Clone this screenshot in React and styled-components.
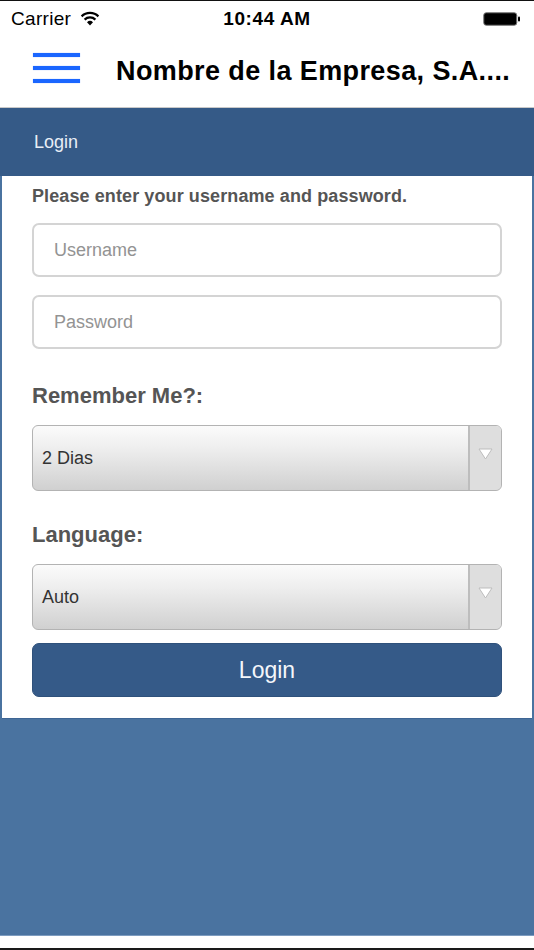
import React from 'react';
import styled, { createGlobalStyle } from 'styled-components';

const GlobalStyle = createGlobalStyle`
  html, body {
    margin: 0;
    padding: 0;
    background: #ffffff;
  }
  * {
    box-sizing: border-box;
  }
`;

const Screen = styled.div`
  width: 534px;
  height: 950px;
  display: flex;
  flex-direction: column;
  font-family: 'Liberation Sans', Arial, sans-serif;
  border-top: 1px solid #111;
  border-bottom: 2px solid #1a1a1a;
  background: #fff;
  overflow: hidden;
`;

const StatusBar = styled.div`
  height: 35px;
  padding: 0 11px;
  display: grid;
  grid-template-columns: 1fr auto 1fr;
  align-items: center;
  font-size: 19px;
  color: #000;
`;

const StatusLeft = styled.div`
  display: flex;
  align-items: center;
  gap: 9px;
  letter-spacing: 0.3px;
`;

const Clock = styled.div`
  font-weight: 700;
  font-size: 19px;
  letter-spacing: 0.6px;
`;

const StatusRight = styled.div`
  display: flex;
  justify-content: flex-end;
  align-items: center;
  padding-right: 2px;
`;

const NavBar = styled.div`
  height: 72px;
  display: flex;
  align-items: center;
  gap: 36px;
  padding: 0 0 0 33px;
  border-bottom: 1px solid #c9c9c9;
`;

const Burger = styled.div`
  width: 47px;
  display: flex;
  flex-direction: column;
  gap: 9px;
  margin-top: -7px;
`;

const BurgerLine = styled.span`
  display: block;
  height: 4px;
  background: #1a66ff;
  box-shadow: 0 0 1px #5c93ff;
`;

const Title = styled.h1`
  margin: 0;
  font-size: 27px;
  font-weight: 700;
  letter-spacing: 0.4px;
  color: #000;
  white-space: nowrap;
`;

const Main = styled.div`
  flex: 1;
  background: #4a73a0;
  display: flex;
  flex-direction: column;
`;

const Header = styled.div`
  height: 68px;
  background: #355a87;
  color: #e8eef6;
  font-size: 18px;
  padding: 0 34px;
  display: flex;
  align-items: center;
`;

const Card = styled.div`
  margin: 0 2px;
  background: #fff;
  padding: 10px 30px 21px 30px;
  display: flex;
  flex-direction: column;
  border-bottom: 1px solid #3e6594;
`;

const Intro = styled.p`
  margin: 0 0 16px;
  font-size: 18px;
  line-height: 21px;
  font-weight: 700;
  letter-spacing: 0.1px;
  color: #555;
`;

const Input = styled.input`
  height: 54px;
  width: 100%;
  border: 2px solid #d4d4d4;
  border-radius: 7px;
  padding: 0 20px;
  font-family: inherit;
  font-size: 18px;
  color: #333;
  margin-bottom: ${p => p.$gap}px;
  outline: none;
  &::placeholder {
    color: #939393;
  }
`;

const Label = styled.label`
  font-size: 22px;
  line-height: 25px;
  font-weight: 700;
  color: #555;
  margin-bottom: 17px;
`;

const Select = styled.div`
  height: 66px;
  display: flex;
  border: 1px solid #b3b3b3;
  border-radius: 6px;
  overflow: hidden;
  margin-bottom: ${p => p.$gap}px;
  background: linear-gradient(to bottom, #fbfbfb 0%, #eeeeee 35%, #d0d0d0 100%);
`;

const SelectValue = styled.div`
  flex: 1;
  display: flex;
  align-items: center;
  padding-left: 9px;
  font-size: 18px;
  color: #333;
`;

const SelectArrow = styled.div`
  width: 33px;
  display: flex;
  align-items: flex-start;
  justify-content: center;
  padding-top: 22px;
  background: #dedede;
  border-left: 2px solid #bdbdbd;
`;

const LoginButton = styled.button`
  height: 54px;
  width: 100%;
  border: 1px solid #2f517b;
  border-radius: 7px;
  background: #355a88;
  color: #f4f6fa;
  font-family: inherit;
  font-size: 23px;
`;

const BottomStrip = styled.div`
  height: 13px;
  background: #fff;
  border-top: 1px solid #7d9cc0;
`;

const Wifi = () => (
  <svg width="20" height="15" viewBox="0 0 20 15">
    <path d="M10 14.5 L7 11.2 A4.4 4.4 0 0 1 13 11.2 Z" fill="#000" />
    <path d="M4.6 8.6 A7.8 7.8 0 0 1 15.4 8.6" stroke="#000" strokeWidth="2.2" fill="none" />
    <path d="M1.6 5.4 A12 12 0 0 1 18.4 5.4" stroke="#000" strokeWidth="2.2" fill="none" />
  </svg>
);

const Battery = () => (
  <svg width="38" height="14" viewBox="0 0 38 14">
    <rect x="0.75" y="0.75" width="33" height="12.5" rx="2.5" fill="#000" stroke="#777" strokeWidth="1" />
    <rect x="35" y="4.5" width="2" height="5" rx="1" fill="#000" />
  </svg>
);

const Caret = () => (
  <svg width="15" height="12" viewBox="0 0 15 12">
    <path d="M1 1 L14 1 L7.5 11 Z" fill="#fff" stroke="#bdbdbd" strokeWidth="1" />
  </svg>
);

const Dropdown = ({ value, gap }) => (
  <Select $gap={gap}>
    <SelectValue>{value}</SelectValue>
    <SelectArrow>
      <Caret />
    </SelectArrow>
  </Select>
);

export default function App() {
  return (
    <>
      <GlobalStyle />
      <Screen>
        <StatusBar>
          <StatusLeft>
            Carrier <Wifi />
          </StatusLeft>
          <Clock>10:44 AM</Clock>
          <StatusRight>
            <Battery />
          </StatusRight>
        </StatusBar>
        <NavBar>
          <Burger>
            <BurgerLine />
            <BurgerLine />
            <BurgerLine />
          </Burger>
          <Title>Nombre de la Empresa, S.A....</Title>
        </NavBar>
        <Main>
          <Header>Login</Header>
          <Card>
            <Intro>Please enter your username and password.</Intro>
            <Input placeholder="Username" $gap={18} />
            <Input type="password" placeholder="Password" $gap={34} />
            <Label>Remember Me?:</Label>
            <Dropdown value="2 Dias" gap={31} />
            <Label>Language:</Label>
            <Dropdown value="Auto" gap={13} />
            <LoginButton>Login</LoginButton>
          </Card>
        </Main>
        <BottomStrip />
      </Screen>
    </>
  );
}
